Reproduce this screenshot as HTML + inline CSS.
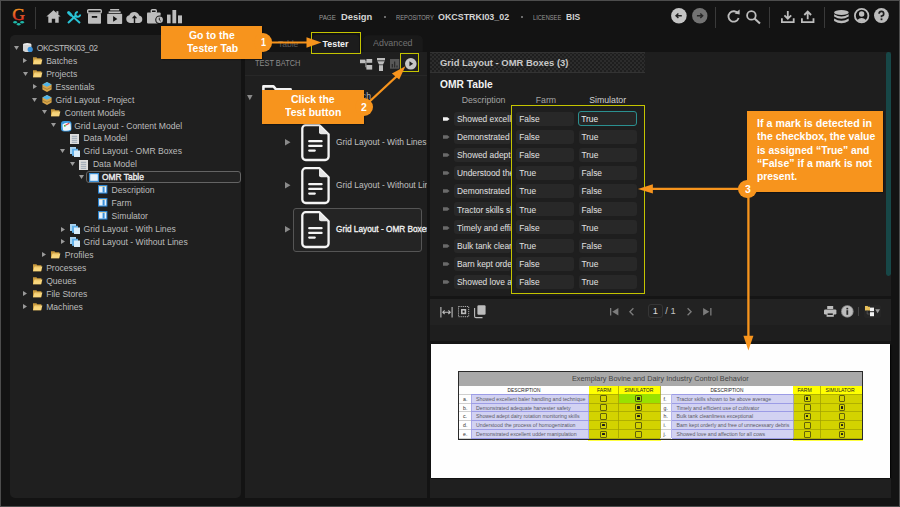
<!DOCTYPE html><html><head><meta charset="utf-8"><style>
*{margin:0;padding:0;box-sizing:border-box}
html,body{width:900px;height:507px;overflow:hidden;background:#131313}
body{position:relative;font-family:"Liberation Sans",sans-serif;color:#bdbdbd}
#frame{position:absolute;left:0;top:0;width:900px;height:507px;border:1px solid #4d4d4d;z-index:60}
.t{position:absolute;white-space:nowrap;line-height:1}
.b{position:absolute}
svg{position:absolute;overflow:visible}
.co{position:absolute;background:#f7941d;z-index:20;box-shadow:0.8px 0.8px 1.6px rgba(0,0,0,.75)}
.circ{position:absolute;width:19px;height:19px;border-radius:50%;background:#f7941d;z-index:22}
.yb{position:absolute;border:1.8px solid #c4c400;z-index:19}
.cell{position:absolute;background:#282828;border-radius:3px;height:14px;overflow:hidden}
</style></head><body>
<div id="frame"></div>
<svg style="left:10px;top:5px" width="18" height="22" viewBox="0 0 18 22"><defs><linearGradient id="gg" x1="0" y1="0" x2="0" y2="1"><stop offset="0.15" stop-color="#f4a41c"/><stop offset="0.6" stop-color="#e8542a"/><stop offset="0.85" stop-color="#d8261e"/></linearGradient></defs><text x="8.6" y="15" text-anchor="middle" font-family="Liberation Serif" font-size="17.5" fill="url(#gg)" stroke="url(#gg)" stroke-width="0.45">G</text><path d="M2.8 17.2 Q5.1 14.8 7.5 17.2 Q5.1 19.6 2.8 17.2 Z" fill="#1fb9aa"/><path d="M9.8 17.2 Q12.1 14.8 14.5 17.2 Q12.1 19.6 9.8 17.2 Z" fill="#1fb9aa"/><path d="M6.3 19.2 Q8.6 16.8 11 19.2 Q8.6 21.6 6.3 19.2 Z" fill="#1fb9aa"/></svg>
<div class="b" style="left:34.8px;top:7px;width:1.5px;height:22px;background:#383838"></div>
<svg style="left:46px;top:10px" width="15" height="13" viewBox="0 0 15 13"><path d="M7.5 0.3 L14.6 6.6 L12.7 6.6 L12.7 12.8 L9.2 12.8 L9.2 8.8 L5.8 8.8 L5.8 12.8 L2.3 12.8 L2.3 6.6 L0.4 6.6 Z" fill="#bdbdbd"/><rect x="10.4" y="1.2" width="2" height="3" fill="#bdbdbd"/></svg>
<svg style="left:66.7px;top:10.5px" width="14" height="12.5" viewBox="0 0 14 12.5"><path d="M1.6 1.6 L3.8 3.8" stroke="#2ac3d6" stroke-width="3" stroke-linecap="round"/><path d="M3.5 3.5 L13 12" stroke="#2ac3d6" stroke-width="1.9"/><path d="M1 12 L9.3 4.3" stroke="#2ac3d6" stroke-width="2.1"/><path d="M13.2 3.4 A2.4 2.4 0 1 1 10.8 1" stroke="#2ac3d6" stroke-width="1.9" fill="none"/></svg>
<svg style="left:86.7px;top:9px" width="15" height="15" viewBox="0 0 15 15"><rect x="0.7" y="0.7" width="13.6" height="3.3" rx="1" fill="none" stroke="#bdbdbd" stroke-width="1.4"/><rect x="1" y="4.6" width="13" height="10.2" rx="0.8" fill="#bdbdbd"/><rect x="4.8" y="7" width="5.4" height="1.8" fill="#131313"/></svg>
<svg style="left:106.7px;top:9px" width="15.3" height="15" viewBox="0 0 15 15"><rect x="3" y="0" width="9" height="1.5" fill="#bdbdbd"/><rect x="1.5" y="2.4" width="12" height="1.6" fill="#bdbdbd"/><rect x="0" y="4.8" width="15" height="10.2" rx="0.8" fill="#bdbdbd"/><path d="M6 7 L10.2 9.9 L6 12.8 Z" fill="#131313"/></svg>
<svg style="left:126px;top:11.2px" width="17" height="12" viewBox="0 0 17 12"><path d="M4 11.9 A3.9 3.9 0 0 1 3.3 4.2 A5.3 5.3 0 0 1 13.2 4.6 A3.7 3.7 0 0 1 13.2 11.9 Z" fill="#bdbdbd"/><path d="M8.5 4.2 L11.2 7.2 L9.2 7.2 L9.2 11.9 L7.8 11.9 L7.8 7.2 L5.8 7.2 Z" fill="#131313"/></svg>
<svg style="left:146.7px;top:9px" width="17" height="15" viewBox="0 0 17 15"><rect x="4.3" y="0.7" width="5" height="3" rx="1" fill="none" stroke="#bdbdbd" stroke-width="1.4"/><rect x="0" y="3.4" width="13.6" height="11" rx="0.8" fill="#bdbdbd"/><circle cx="12.6" cy="10.8" r="4.4" fill="#131313"/><circle cx="12.6" cy="10.8" r="3.3" fill="#bdbdbd"/><path d="M12.3 8.7 L12.3 11 L13.8 12.2" stroke="#131313" stroke-width="0.9" fill="none"/></svg>
<svg style="left:167.3px;top:10px" width="15.5" height="13.3" viewBox="0 0 15.5 13.3"><rect x="0" y="4.6" width="3.6" height="8.7" fill="#bdbdbd"/><rect x="5.4" y="0" width="3.8" height="13.3" fill="#bdbdbd"/><rect x="11" y="5.4" width="4" height="7.9" fill="#bdbdbd"/></svg>
<div class="t" style="left:319.30px;top:13.87px;font-size:7px;color:#999999;transform:scaleX(0.8926);transform-origin:0 0;">PAGE</div>
<div class="t" style="left:341.00px;top:12.51px;font-size:9.2px;color:#d4d4d4;transform:scaleX(1.0204);transform-origin:0 0;font-weight:bold;">Design</div>
<div class="b" style="left:384.2px;top:16px;width:2px;height:2px;background:#8a8a8a;border-radius:1px"></div>
<div class="t" style="left:395.70px;top:13.87px;font-size:7px;color:#999999;transform:scaleX(0.8281);transform-origin:0 0;">REPOSITORY</div>
<div class="t" style="left:438.30px;top:12.51px;font-size:9.2px;color:#d4d4d4;transform:scaleX(0.9670);transform-origin:0 0;font-weight:bold;">OKCSTRKI03_02</div>
<div class="b" style="left:521px;top:16px;width:2px;height:2px;background:#8a8a8a;border-radius:1px"></div>
<div class="t" style="left:532.70px;top:13.87px;font-size:7px;color:#999999;transform:scaleX(0.8144);transform-origin:0 0;">LICENSEE</div>
<div class="t" style="left:566.00px;top:12.51px;font-size:9.2px;color:#d4d4d4;transform:scaleX(0.9259);transform-origin:0 0;font-weight:bold;">BIS</div>
<svg style="left:671.4px;top:8.2px" width="16" height="16" viewBox="0 0 16 16"><circle cx="7.9" cy="7.8" r="7.8" fill="#c4c4c4"/><path d="M10.8 7.8 H5.2 M7.4 5.5 L5 7.8 L7.4 10.1" stroke="#222" stroke-width="1.4" fill="none"/></svg>
<svg style="left:691.8px;top:8.2px" width="16" height="16" viewBox="0 0 16 16"><circle cx="7.8" cy="7.8" r="7.7" fill="#737373"/><path d="M4.9 7.8 H10.5 M8.3 5.5 L10.7 7.8 L8.3 10.1" stroke="#262626" stroke-width="1.4" fill="none"/></svg>
<div class="b" style="left:715.2px;top:7px;width:1px;height:21px;background:#3a3a3a"></div>
<div class="b" style="left:769.4px;top:7px;width:1px;height:21px;background:#3a3a3a"></div>
<div class="b" style="left:823.8px;top:7px;width:1px;height:21px;background:#3a3a3a"></div>
<svg style="left:727px;top:9px" width="13" height="14" viewBox="0 0 13 14"><path d="M11 4.6 A5.2 5.2 0 1 0 11.6 9" stroke="#bdbdbd" stroke-width="1.8" fill="none"/><path d="M7.6 4.6 L12.6 5.6 L12.6 0.6 Z" fill="#bdbdbd"/></svg>
<svg style="left:746.3px;top:9.5px" width="15" height="14" viewBox="0 0 15 14"><circle cx="5.4" cy="5.4" r="4.3" stroke="#bdbdbd" stroke-width="1.8" fill="none"/><path d="M8.5 8.5 L14 13.5" stroke="#bdbdbd" stroke-width="2.1"/></svg>
<svg style="left:780.5px;top:10.5px" width="14" height="12" viewBox="0 0 14 12"><path d="M6.8 0 V7.5 M3.4 4.3 L6.8 7.7 L10.2 4.3" stroke="#bdbdbd" stroke-width="1.8" fill="none"/><path d="M0.9 7.2 V11.1 H12.7 V7.2" stroke="#bdbdbd" stroke-width="1.8" fill="none"/></svg>
<svg style="left:801.2px;top:10.5px" width="14" height="12" viewBox="0 0 14 12"><path d="M6.7 8.2 V0.8 M3.3 4 L6.7 0.6 L10.1 4" stroke="#bdbdbd" stroke-width="1.8" fill="none"/><path d="M0.9 7.2 V11.1 H12.5 V7.2" stroke="#bdbdbd" stroke-width="1.8" fill="none"/></svg>
<svg style="left:833.7px;top:9.7px" width="15" height="14" viewBox="0 0 15 14"><ellipse cx="7.4" cy="2.5" rx="7.3" ry="2.5" fill="#bdbdbd"/><path d="M0.1 4.2 Q7.4 8.6 14.7 4.2 V6.6 Q7.4 11 0.1 6.6 Z" fill="#bdbdbd"/><path d="M0.1 8.6 Q7.4 13 14.7 8.6 V11 Q7.4 15.4 0.1 11 Z" fill="#bdbdbd"/></svg>
<svg style="left:854.1px;top:8.3px" width="16" height="16" viewBox="0 0 16 16"><circle cx="7.65" cy="7.65" r="6.75" stroke="#bdbdbd" stroke-width="1.8" fill="none"/><circle cx="7.65" cy="6" r="2.7" fill="#bdbdbd"/><path d="M3 12.3 Q7.65 7.5 12.3 12.3 Q7.65 15.5 3 12.3 Z" fill="#bdbdbd"/></svg>
<svg style="left:874.1px;top:8.3px" width="15" height="15" viewBox="0 0 15 15"><circle cx="7.4" cy="7.5" r="7.4" fill="#bdbdbd"/><path d="M5.1 5.8 A2.3 2.3 0 1 1 7.5 8 V9.3" stroke="#1e1e1e" stroke-width="1.7" fill="none"/><rect x="6.6" y="10.4" width="1.8" height="1.8" fill="#1e1e1e"/></svg>
<div class="b" style="left:9.6px;top:35.3px;width:231.6px;height:462.3px;background:#1f1f1f;border-radius:5px"></div>
<div class="b" style="left:86px;top:170.6px;width:154.8px;height:12.4px;border:1px solid #646464;border-radius:3px;background:#232323"></div>
<svg style="left:13.6px;top:45.7px" width="5" height="4" viewBox="0 0 5 4"><path d="M0 0 H5 L2.5 4 Z" fill="#9a9a9a"/></svg>
<svg style="left:23.2px;top:43.0px" width="10" height="9" viewBox="0 0 10 9"><ellipse cx="4.2" cy="1.8" rx="4.2" ry="1.8" fill="#efefef"/><rect x="0" y="1.8" width="8.4" height="5.4" fill="#d6d6d6"/><ellipse cx="4.2" cy="7.2" rx="4.2" ry="1.8" fill="#d6d6d6"/><circle cx="7.2" cy="6.4" r="2.6" fill="#3a93dc"/></svg>
<div class="t" style="left:36.80px;top:43.82px;font-size:8.6px;color:#bcbcbc;letter-spacing:-0.55px;">OKCSTRKI03_02</div>
<svg style="left:23.1px;top:58.1px" width="4" height="5" viewBox="0 0 4 5"><path d="M0 0 V5 L4 2.5 Z" fill="#9a9a9a"/></svg>
<svg style="left:32.8px;top:57.0px" width="9.4" height="7.2" viewBox="0 0 9.4 7.2"><path d="M0 0.3 H3.4 L4.3 1.2 H8.4 V7.2 H0 Z" fill="#c8993c"/><path d="M1.6 2.6 H9.4 L8 7.2 H0 Z" fill="#f7d67e"/><path d="M2.5 3.6 H7.5" stroke="#e8c060" stroke-width="0.5"/></svg>
<div class="t" style="left:46.15px;top:56.77px;font-size:8.6px;color:#bcbcbc;">Batches</div>
<svg style="left:22.9px;top:71.6px" width="5" height="4" viewBox="0 0 5 4"><path d="M0 0 H5 L2.5 4 Z" fill="#9a9a9a"/></svg>
<svg style="left:32.8px;top:70.0px" width="9.4" height="7.2" viewBox="0 0 9.4 7.2"><path d="M0 0.3 H3.4 L4.3 1.2 H8.4 V7.2 H0 Z" fill="#c8993c"/><path d="M1.6 2.6 H9.4 L8 7.2 H0 Z" fill="#f7d67e"/><path d="M2.5 3.6 H7.5" stroke="#e8c060" stroke-width="0.5"/></svg>
<div class="t" style="left:46.15px;top:69.72px;font-size:8.6px;color:#bcbcbc;">Projects</div>
<svg style="left:32.5px;top:84.0px" width="4" height="5" viewBox="0 0 4 5"><path d="M0 0 V5 L4 2.5 Z" fill="#9a9a9a"/></svg>
<svg style="left:41.9px;top:81.8px" width="10" height="10" viewBox="0 0 10 10"><path d="M5 0 L9.6 2.4 V7.6 L5 10 L0.4 7.6 V2.4 Z" fill="#d9a64a"/><path d="M5 0 L9.6 2.4 L5 4.8 L0.4 2.4 Z" fill="#4fb4ea"/><path d="M0.4 5.2 L5 7.4 L9.6 5.2" stroke="#8a6a2a" stroke-width="0.6" fill="none"/></svg>
<div class="t" style="left:55.50px;top:82.67px;font-size:8.6px;color:#bcbcbc;">Essentials</div>
<svg style="left:32.3px;top:97.5px" width="5" height="4" viewBox="0 0 5 4"><path d="M0 0 H5 L2.5 4 Z" fill="#9a9a9a"/></svg>
<svg style="left:41.9px;top:94.8px" width="10" height="10" viewBox="0 0 10 10"><path d="M5 0 L9.6 2.4 V7.6 L5 10 L0.4 7.6 V2.4 Z" fill="#d9a64a"/><path d="M5 0 L9.6 2.4 L5 4.8 L0.4 2.4 Z" fill="#4fb4ea"/><path d="M0.4 5.2 L5 7.4 L9.6 5.2" stroke="#8a6a2a" stroke-width="0.6" fill="none"/></svg>
<div class="t" style="left:55.50px;top:95.62px;font-size:8.6px;color:#bcbcbc;">Grid Layout - Project</div>
<svg style="left:41.6px;top:110.4px" width="5" height="4" viewBox="0 0 5 4"><path d="M0 0 H5 L2.5 4 Z" fill="#9a9a9a"/></svg>
<svg style="left:51.4px;top:108.8px" width="9.4" height="7.2" viewBox="0 0 9.4 7.2"><path d="M0 0.3 H3.4 L4.3 1.2 H8.4 V7.2 H0 Z" fill="#c8993c"/><path d="M1.6 2.6 H9.4 L8 7.2 H0 Z" fill="#f7d67e"/><path d="M2.5 3.6 H7.5" stroke="#e8c060" stroke-width="0.5"/></svg>
<div class="t" style="left:64.85px;top:108.57px;font-size:8.6px;color:#bcbcbc;">Content Models</div>
<svg style="left:51.0px;top:123.4px" width="5" height="4" viewBox="0 0 5 4"><path d="M0 0 H5 L2.5 4 Z" fill="#9a9a9a"/></svg>
<svg style="left:60.6px;top:120.7px" width="10.5" height="10.5" viewBox="0 0 10.5 10.5"><rect x="0" y="0" width="10.5" height="10.5" rx="3" fill="#3a9ae0"/><path d="M1.5 3.5 Q5 0.8 9.5 2.5 L10 8.5 Q6 10.5 2 9.2 Z" fill="#eef4f8"/><path d="M4.5 4.2 L8.2 2.2" stroke="#e04040" stroke-width="1.1"/><rect x="3" y="4" width="1.6" height="1.6" fill="#40b040"/></svg>
<div class="t" style="left:74.20px;top:121.52px;font-size:8.6px;color:#bcbcbc;">Grid Layout - Content Model</div>
<svg style="left:70.0px;top:133.7px" width="9" height="10" viewBox="0 0 9 10"><rect x="0" y="0" width="9" height="10" fill="#dedede"/><path d="M1.8 2.3 H7.2 M1.8 4.3 H7.2 M1.8 6.3 H7.2 M1.8 8.3 H7.2" stroke="#8898a8" stroke-width="0.8"/></svg>
<div class="t" style="left:83.55px;top:134.47px;font-size:8.6px;color:#bcbcbc;">Data Model</div>
<svg style="left:60.3px;top:149.3px" width="5" height="4" viewBox="0 0 5 4"><path d="M0 0 H5 L2.5 4 Z" fill="#9a9a9a"/></svg>
<svg style="left:70.0px;top:146.6px" width="10" height="10" viewBox="0 0 10 10"><rect x="0" y="0" width="6" height="7" fill="#a9d3f0"/><rect x="2" y="1.8" width="6" height="7" fill="#5fb0ea"/><rect x="4" y="3.5" width="6" height="6.5" fill="#d7ecfa"/></svg>
<div class="t" style="left:83.55px;top:147.42px;font-size:8.6px;color:#bcbcbc;">Grid Layout - OMR Boxes</div>
<svg style="left:69.7px;top:162.2px" width="5" height="4" viewBox="0 0 5 4"><path d="M0 0 H5 L2.5 4 Z" fill="#9a9a9a"/></svg>
<svg style="left:79.3px;top:159.6px" width="9" height="10" viewBox="0 0 9 10"><rect x="0" y="0" width="9" height="10" fill="#dedede"/><path d="M1.8 2.3 H7.2 M1.8 4.3 H7.2 M1.8 6.3 H7.2 M1.8 8.3 H7.2" stroke="#8898a8" stroke-width="0.8"/></svg>
<div class="t" style="left:92.90px;top:160.37px;font-size:8.6px;color:#bcbcbc;">Data Model</div>
<svg style="left:79.0px;top:175.2px" width="5" height="4" viewBox="0 0 5 4"><path d="M0 0 H5 L2.5 4 Z" fill="#9a9a9a"/></svg>
<svg style="left:88.7px;top:172.5px" width="10" height="9" viewBox="0 0 10 9"><rect x="0" y="0" width="10" height="9" fill="#3a8fd6"/><rect x="1.2" y="1.2" width="7.6" height="6.6" fill="#e8f2fb"/></svg>
<div class="t" style="left:102.25px;top:173.24px;font-size:8.7px;color:#f0f0f0;transform:scaleX(0.9664);transform-origin:0 0;-webkit-text-stroke:0.35px #f0f0f0;">OMR Table</div>
<svg style="left:98.0px;top:185.4px" width="9.4" height="8.6" viewBox="0 0 9.4 8.6"><rect x="0" y="0" width="9.4" height="8.6" fill="#2a84d2"/><rect x="1.1" y="1.1" width="7.2" height="6.4" fill="#e6f2fc"/><rect x="4.6" y="1.1" width="2" height="6.4" fill="#3a90da"/><rect x="1.1" y="1.1" width="7.2" height="0.8" fill="#d8d0a0"/></svg>
<div class="t" style="left:111.60px;top:186.27px;font-size:8.6px;color:#bcbcbc;">Description</div>
<svg style="left:98.0px;top:198.4px" width="9.4" height="8.6" viewBox="0 0 9.4 8.6"><rect x="0" y="0" width="9.4" height="8.6" fill="#2a84d2"/><rect x="1.1" y="1.1" width="7.2" height="6.4" fill="#e6f2fc"/><rect x="4.6" y="1.1" width="2" height="6.4" fill="#3a90da"/><rect x="1.1" y="1.1" width="7.2" height="0.8" fill="#d8d0a0"/></svg>
<div class="t" style="left:111.60px;top:199.22px;font-size:8.6px;color:#bcbcbc;">Farm</div>
<svg style="left:98.0px;top:211.3px" width="9.4" height="8.6" viewBox="0 0 9.4 8.6"><rect x="0" y="0" width="9.4" height="8.6" fill="#2a84d2"/><rect x="1.1" y="1.1" width="7.2" height="6.4" fill="#e6f2fc"/><rect x="4.6" y="1.1" width="2" height="6.4" fill="#3a90da"/><rect x="1.1" y="1.1" width="7.2" height="0.8" fill="#d8d0a0"/></svg>
<div class="t" style="left:111.60px;top:212.17px;font-size:8.6px;color:#bcbcbc;">Simulator</div>
<svg style="left:60.5px;top:226.5px" width="4" height="5" viewBox="0 0 4 5"><path d="M0 0 V5 L4 2.5 Z" fill="#9a9a9a"/></svg>
<svg style="left:70.0px;top:224.3px" width="10" height="10" viewBox="0 0 10 10"><rect x="0" y="0" width="6" height="7" fill="#a9d3f0"/><rect x="2" y="1.8" width="6" height="7" fill="#5fb0ea"/><rect x="4" y="3.5" width="6" height="6.5" fill="#d7ecfa"/></svg>
<div class="t" style="left:83.55px;top:225.12px;font-size:8.6px;color:#bcbcbc;">Grid Layout - With Lines</div>
<svg style="left:60.5px;top:239.4px" width="4" height="5" viewBox="0 0 4 5"><path d="M0 0 V5 L4 2.5 Z" fill="#9a9a9a"/></svg>
<svg style="left:70.0px;top:237.2px" width="10" height="10" viewBox="0 0 10 10"><rect x="0" y="0" width="6" height="7" fill="#a9d3f0"/><rect x="2" y="1.8" width="6" height="7" fill="#5fb0ea"/><rect x="4" y="3.5" width="6" height="6.5" fill="#d7ecfa"/></svg>
<div class="t" style="left:83.55px;top:238.07px;font-size:8.6px;color:#bcbcbc;">Grid Layout - Without Lines</div>
<svg style="left:41.8px;top:252.4px" width="4" height="5" viewBox="0 0 4 5"><path d="M0 0 V5 L4 2.5 Z" fill="#9a9a9a"/></svg>
<svg style="left:51.4px;top:251.3px" width="9.4" height="7.2" viewBox="0 0 9.4 7.2"><path d="M0 0.3 H3.4 L4.3 1.2 H8.4 V7.2 H0 Z" fill="#c8993c"/><path d="M1.6 2.6 H9.4 L8 7.2 H0 Z" fill="#f7d67e"/><path d="M2.5 3.6 H7.5" stroke="#e8c060" stroke-width="0.5"/></svg>
<div class="t" style="left:64.85px;top:251.02px;font-size:8.6px;color:#bcbcbc;">Profiles</div>
<svg style="left:32.8px;top:264.3px" width="9.4" height="7.2" viewBox="0 0 9.4 7.2"><path d="M0 0.3 H3.4 L4.3 1.2 H8.4 V7.2 H0 Z" fill="#c8993c"/><path d="M1.6 2.6 H9.4 L8 7.2 H0 Z" fill="#f7d67e"/><path d="M2.5 3.6 H7.5" stroke="#e8c060" stroke-width="0.5"/></svg>
<div class="t" style="left:46.15px;top:263.97px;font-size:8.6px;color:#bcbcbc;">Processes</div>
<svg style="left:32.8px;top:277.2px" width="9.4" height="7.2" viewBox="0 0 9.4 7.2"><path d="M0 0.3 H3.4 L4.3 1.2 H8.4 V7.2 H0 Z" fill="#c8993c"/><path d="M1.6 2.6 H9.4 L8 7.2 H0 Z" fill="#f7d67e"/><path d="M2.5 3.6 H7.5" stroke="#e8c060" stroke-width="0.5"/></svg>
<div class="t" style="left:46.15px;top:276.92px;font-size:8.6px;color:#bcbcbc;">Queues</div>
<svg style="left:23.1px;top:291.2px" width="4" height="5" viewBox="0 0 4 5"><path d="M0 0 V5 L4 2.5 Z" fill="#9a9a9a"/></svg>
<svg style="left:32.8px;top:290.2px" width="9.4" height="7.2" viewBox="0 0 9.4 7.2"><path d="M0 0.3 H3.4 L4.3 1.2 H8.4 V7.2 H0 Z" fill="#c8993c"/><path d="M1.6 2.6 H9.4 L8 7.2 H0 Z" fill="#f7d67e"/><path d="M2.5 3.6 H7.5" stroke="#e8c060" stroke-width="0.5"/></svg>
<div class="t" style="left:46.15px;top:289.87px;font-size:8.6px;color:#bcbcbc;">File Stores</div>
<svg style="left:23.1px;top:304.2px" width="4" height="5" viewBox="0 0 4 5"><path d="M0 0 V5 L4 2.5 Z" fill="#9a9a9a"/></svg>
<svg style="left:32.8px;top:303.1px" width="9.4" height="7.2" viewBox="0 0 9.4 7.2"><path d="M0 0.3 H3.4 L4.3 1.2 H8.4 V7.2 H0 Z" fill="#c8993c"/><path d="M1.6 2.6 H9.4 L8 7.2 H0 Z" fill="#f7d67e"/><path d="M2.5 3.6 H7.5" stroke="#e8c060" stroke-width="0.5"/></svg>
<div class="t" style="left:46.15px;top:302.82px;font-size:8.6px;color:#bcbcbc;">Machines</div>
<div class="b" style="left:363.6px;top:35.8px;width:58.2px;height:15.2px;background:#191919;border-radius:4px 4px 0 0;box-shadow:0 0 0 0.6px #1c1c1c"></div>
<div class="b" style="left:313px;top:34.5px;width:45.5px;height:17.5px;background:#1c1c1c;border-radius:3px 3px 0 0"></div>
<div class="t" style="left:277.50px;top:39.97px;font-size:8.9px;color:#5c5c5c;transform:scaleX(0.9541);transform-origin:0 0;">Table</div>
<div class="t" style="left:322.50px;top:39.57px;font-size:8.9px;color:#f2f2f2;font-weight:bold;">Tester</div>
<div class="t" style="left:372.70px;top:39.40px;font-size:9.1px;color:#727272;transform:scaleX(0.9784);transform-origin:0 0;">Advanced</div>
<div class="b" style="left:244.8px;top:51.6px;width:182.4px;height:446.4px;background:#1f1f1f"></div>
<div class="b" style="left:244.8px;top:75.3px;width:181.8px;height:1px;background:#272727"></div>
<div class="t" style="left:254.80px;top:60.26px;font-size:8.2px;color:#8c8c8c;transform:scaleX(0.9051);transform-origin:0 0;">TEST BATCH</div>
<svg style="left:360px;top:58.6px" width="12.2" height="10.6" viewBox="0 0 12.2 10.6"><rect x="0" y="0.6" width="5.4" height="3.6" fill="#bdbdbd"/><rect x="6.4" y="0" width="5.8" height="3.8" fill="#bdbdbd"/><rect x="6.4" y="6" width="5.8" height="4.6" fill="#bdbdbd"/><path d="M5.4 2.4 H6.4 M5.9 2.4 V8.2 H6.4" stroke="#bdbdbd" stroke-width="0.9" fill="none"/></svg>
<svg style="left:377px;top:57.5px" width="8" height="13" viewBox="0 0 8 13"><rect x="0" y="0" width="8" height="2.4" fill="#bdbdbd"/><path d="M0.4 3.3 H7.6 L6 6.6 H2 Z" fill="#bdbdbd"/><rect x="2" y="7.2" width="4" height="5.8" fill="#bdbdbd"/></svg>
<svg style="left:390.4px;top:59px" width="9.3" height="9.7" viewBox="0 0 9.3 9.7"><rect x="0" y="0" width="9.3" height="9.7" fill="#585858"/><path d="M2.3 8.5 V5 M4.65 8.5 V2.5 M7 8.5 V6.5" stroke="#2a2a2a" stroke-width="1.2"/></svg>
<svg style="left:404.6px;top:58.4px" width="11.6" height="11.6" viewBox="0 0 12 12"><circle cx="6" cy="6" r="6" fill="#c6c6c6"/><path d="M4.6 3.4 L8.4 6 L4.6 8.6 Z" fill="#1f1f1f"/></svg>
<svg style="left:247.4px;top:95.0px" width="5.6" height="5.2" viewBox="0 0 5.6 5.2"><path d="M0 0 H5.6 L2.8 5.2 Z" fill="#8a8a8a"/></svg>
<svg style="left:261.6px;top:85.4px" width="30" height="24" viewBox="0 0 30 24"><path d="M1.4 1.4 H11.5 L14 4.3 H28.6 V22.6 H1.4 Z" fill="none" stroke="#f2f2f2" stroke-width="2.6" stroke-linejoin="round"/></svg>
<div class="b" style="left:293px;top:208px;width:129px;height:43.5px;border:1px solid #555;border-radius:3px;background:#242424"></div>
<svg style="left:284.6px;top:138.7px" width="5.5" height="6.5" viewBox="0 0 5.5 6.5"><path d="M0 0 V6.5 L5.5 3.25 Z" fill="#8a8a8a"/></svg>
<svg style="left:300.6px;top:124px" width="29" height="37" viewBox="0 0 29 37"><path d="M4.7 1.2 H18.5 L27.6 10.3 V32.6 A3.4 3.4 0 0 1 24.2 36 H4.7 A3.4 3.4 0 0 1 1.3 32.6 V4.6 A3.4 3.4 0 0 1 4.7 1.2 Z" fill="none" stroke="#f4f4f4" stroke-width="2.3" stroke-linejoin="round"/><path d="M18 1.2 V8.3 A2 2 0 0 0 20 10.3 H27.6 Z" fill="#e6e6e6"/><path d="M8.2 17.2 H20.6 M8.2 21.9 H20.6 M8.2 26.6 H13.8" stroke="#f4f4f4" stroke-width="2.2" stroke-linecap="round"/></svg>
<svg style="left:284.6px;top:182.0px" width="5.5" height="6.5" viewBox="0 0 5.5 6.5"><path d="M0 0 V6.5 L5.5 3.25 Z" fill="#8a8a8a"/></svg>
<svg style="left:300.6px;top:167.4px" width="29" height="37" viewBox="0 0 29 37"><path d="M4.7 1.2 H18.5 L27.6 10.3 V32.6 A3.4 3.4 0 0 1 24.2 36 H4.7 A3.4 3.4 0 0 1 1.3 32.6 V4.6 A3.4 3.4 0 0 1 4.7 1.2 Z" fill="none" stroke="#f4f4f4" stroke-width="2.3" stroke-linejoin="round"/><path d="M18 1.2 V8.3 A2 2 0 0 0 20 10.3 H27.6 Z" fill="#e6e6e6"/><path d="M8.2 17.2 H20.6 M8.2 21.9 H20.6 M8.2 26.6 H13.8" stroke="#f4f4f4" stroke-width="2.2" stroke-linecap="round"/></svg>
<svg style="left:284.6px;top:225.5px" width="5.5" height="6.5" viewBox="0 0 5.5 6.5"><path d="M0 0 V6.5 L5.5 3.25 Z" fill="#8a8a8a"/></svg>
<svg style="left:300.6px;top:211px" width="29" height="37" viewBox="0 0 29 37"><path d="M4.7 1.2 H18.5 L27.6 10.3 V32.6 A3.4 3.4 0 0 1 24.2 36 H4.7 A3.4 3.4 0 0 1 1.3 32.6 V4.6 A3.4 3.4 0 0 1 4.7 1.2 Z" fill="none" stroke="#f4f4f4" stroke-width="2.3" stroke-linejoin="round"/><path d="M18 1.2 V8.3 A2 2 0 0 0 20 10.3 H27.6 Z" fill="#e6e6e6"/><path d="M8.2 17.2 H20.6 M8.2 21.9 H20.6 M8.2 26.6 H13.8" stroke="#f4f4f4" stroke-width="2.2" stroke-linecap="round"/></svg>
<div class="b" style="left:244px;top:80px;width:183.2px;height:300px;overflow:hidden">
<div class="t" style="left:86.80px;top:11.92px;font-size:8.6px;color:#bcbcbc;">Test Batch</div>
<div class="t" style="left:92.10px;top:57.64px;font-size:8.7px;color:#c0c0c0;transform:scaleX(0.9708);transform-origin:0 0;">Grid Layout - With Lines</div>
<div class="t" style="left:92.10px;top:100.94px;font-size:8.7px;color:#c0c0c0;transform:scaleX(0.9708);transform-origin:0 0;">Grid Layout - Without Lines</div>
<div class="t" style="left:92.20px;top:144.52px;font-size:8.6px;color:#f4f4f4;transform:scaleX(0.9598);transform-origin:0 0;-webkit-text-stroke:0.3px #f4f4f4;">Grid Layout - OMR Boxes</div>
</div>
<div class="b" style="left:430px;top:52px;width:460.6px;height:246px;background:#1e1e1e"></div>
<div class="b" style="left:430px;top:52px;width:215px;height:20px;background-color:#252525;background-image:repeating-conic-gradient(#2c2c2c 0 25%, #1e1e1e 0 50%);background-size:4px 4px"></div>
<div class="b" style="left:430px;top:72px;width:215px;height:1px;background:#333"></div>
<div class="b" style="left:430px;top:51.8px;width:215px;height:1px;background:#323232"></div>
<div class="t" style="left:439.70px;top:58.10px;font-size:9.8px;color:#c8c8c8;transform:scaleX(0.9633);transform-origin:0 0;font-weight:bold;">Grid Layout - OMR Boxes (3)</div>
<div class="t" style="left:439.70px;top:79.60px;font-size:10.4px;color:#f2f2f2;transform:scaleX(0.9861);transform-origin:0 0;font-weight:bold;">OMR Table</div>
<div class="t" style="left:461.70px;top:95.59px;font-size:8.75px;color:#a4a4a4;">Description</div>
<div class="t" style="left:535.70px;top:95.59px;font-size:8.75px;color:#a4a4a4;">Farm</div>
<div class="t" style="left:589.20px;top:95.59px;font-size:8.75px;color:#d0d0d0;">Simulator</div>
<svg style="left:442.8px;top:116.7px" width="6.6" height="4" viewBox="0 0 6.6 4"><path d="M0 0.3 H4.4 L6.6 2 L4.4 3.7 H0 Z" fill="#f2f2f2"/></svg>
<div class="cell" style="left:454.4px;top:111.50px;width:56.5px"><div class="t" style="left:2.60px;top:3.29px;font-size:8.4px;color:#e2e2e2;">Showed excellent baler handling and technique</div></div>
<div class="cell" style="left:515.8px;top:111.50px;width:58.5px"><div class="t" style="left:3.40px;top:3.29px;font-size:8.4px;color:#e2e2e2;">False</div></div>
<div class="cell" style="left:578.2px;top:111.00px;width:58.8px;height:14.8px;border:1.2px solid #2b9090;background:#262626"><div class="t" style="left:2.10px;top:2.59px;font-size:8.4px;color:#ececec;">True</div></div>
<svg style="left:442.8px;top:134.8px" width="6.6" height="4" viewBox="0 0 6.6 4"><path d="M0 0.3 H4.4 L6.6 2 L4.4 3.7 H0 Z" fill="#6a6a6a"/></svg>
<div class="cell" style="left:454.4px;top:129.65px;width:56.5px"><div class="t" style="left:2.60px;top:3.29px;font-size:8.4px;color:#e2e2e2;">Demonstrated adequate harvester safety</div></div>
<div class="cell" style="left:515.8px;top:129.65px;width:58.5px"><div class="t" style="left:3.40px;top:3.29px;font-size:8.4px;color:#e2e2e2;">False</div></div>
<div class="cell" style="left:578.5px;top:129.65px;width:58.5px"><div class="t" style="left:3.00px;top:3.29px;font-size:8.4px;color:#e2e2e2;">True</div></div>
<svg style="left:442.8px;top:153.0px" width="6.6" height="4" viewBox="0 0 6.6 4"><path d="M0 0.3 H4.4 L6.6 2 L4.4 3.7 H0 Z" fill="#6a6a6a"/></svg>
<div class="cell" style="left:454.4px;top:147.80px;width:56.5px"><div class="t" style="left:2.60px;top:3.29px;font-size:8.4px;color:#e2e2e2;">Showed adept dairy rotation monitoring skills</div></div>
<div class="cell" style="left:515.8px;top:147.80px;width:58.5px"><div class="t" style="left:3.40px;top:3.29px;font-size:8.4px;color:#e2e2e2;">False</div></div>
<div class="cell" style="left:578.5px;top:147.80px;width:58.5px"><div class="t" style="left:3.00px;top:3.29px;font-size:8.4px;color:#e2e2e2;">True</div></div>
<svg style="left:442.8px;top:171.1px" width="6.6" height="4" viewBox="0 0 6.6 4"><path d="M0 0.3 H4.4 L6.6 2 L4.4 3.7 H0 Z" fill="#6a6a6a"/></svg>
<div class="cell" style="left:454.4px;top:165.95px;width:56.5px"><div class="t" style="left:2.60px;top:3.29px;font-size:8.4px;color:#e2e2e2;">Understood the process of homogenization</div></div>
<div class="cell" style="left:515.8px;top:165.95px;width:58.5px"><div class="t" style="left:3.40px;top:3.29px;font-size:8.4px;color:#e2e2e2;">True</div></div>
<div class="cell" style="left:578.5px;top:165.95px;width:58.5px"><div class="t" style="left:3.00px;top:3.29px;font-size:8.4px;color:#e2e2e2;">False</div></div>
<svg style="left:442.8px;top:189.3px" width="6.6" height="4" viewBox="0 0 6.6 4"><path d="M0 0.3 H4.4 L6.6 2 L4.4 3.7 H0 Z" fill="#6a6a6a"/></svg>
<div class="cell" style="left:454.4px;top:184.10px;width:56.5px"><div class="t" style="left:2.60px;top:3.29px;font-size:8.4px;color:#e2e2e2;">Demonstrated excellent udder manipulation</div></div>
<div class="cell" style="left:515.8px;top:184.10px;width:58.5px"><div class="t" style="left:3.40px;top:3.29px;font-size:8.4px;color:#e2e2e2;">True</div></div>
<div class="cell" style="left:578.5px;top:184.10px;width:58.5px"><div class="t" style="left:3.00px;top:3.29px;font-size:8.4px;color:#e2e2e2;">False</div></div>
<svg style="left:442.8px;top:207.4px" width="6.6" height="4" viewBox="0 0 6.6 4"><path d="M0 0.3 H4.4 L6.6 2 L4.4 3.7 H0 Z" fill="#6a6a6a"/></svg>
<div class="cell" style="left:454.4px;top:202.25px;width:56.5px"><div class="t" style="left:2.60px;top:3.29px;font-size:8.4px;color:#e2e2e2;">Tractor skills shown to be above average</div></div>
<div class="cell" style="left:515.8px;top:202.25px;width:58.5px"><div class="t" style="left:3.40px;top:3.29px;font-size:8.4px;color:#e2e2e2;">True</div></div>
<div class="cell" style="left:578.5px;top:202.25px;width:58.5px"><div class="t" style="left:3.00px;top:3.29px;font-size:8.4px;color:#e2e2e2;">False</div></div>
<svg style="left:442.8px;top:225.6px" width="6.6" height="4" viewBox="0 0 6.6 4"><path d="M0 0.3 H4.4 L6.6 2 L4.4 3.7 H0 Z" fill="#6a6a6a"/></svg>
<div class="cell" style="left:454.4px;top:220.40px;width:56.5px"><div class="t" style="left:2.60px;top:3.29px;font-size:8.4px;color:#e2e2e2;">Timely and efficient use of cultivator</div></div>
<div class="cell" style="left:515.8px;top:220.40px;width:58.5px"><div class="t" style="left:3.40px;top:3.29px;font-size:8.4px;color:#e2e2e2;">False</div></div>
<div class="cell" style="left:578.5px;top:220.40px;width:58.5px"><div class="t" style="left:3.00px;top:3.29px;font-size:8.4px;color:#e2e2e2;">True</div></div>
<svg style="left:442.8px;top:243.7px" width="6.6" height="4" viewBox="0 0 6.6 4"><path d="M0 0.3 H4.4 L6.6 2 L4.4 3.7 H0 Z" fill="#6a6a6a"/></svg>
<div class="cell" style="left:454.4px;top:238.55px;width:56.5px"><div class="t" style="left:2.60px;top:3.29px;font-size:8.4px;color:#e2e2e2;">Bulk tank cleanliness exceptional</div></div>
<div class="cell" style="left:515.8px;top:238.55px;width:58.5px"><div class="t" style="left:3.40px;top:3.29px;font-size:8.4px;color:#e2e2e2;">True</div></div>
<div class="cell" style="left:578.5px;top:238.55px;width:58.5px"><div class="t" style="left:3.00px;top:3.29px;font-size:8.4px;color:#e2e2e2;">False</div></div>
<svg style="left:442.8px;top:261.9px" width="6.6" height="4" viewBox="0 0 6.6 4"><path d="M0 0.3 H4.4 L6.6 2 L4.4 3.7 H0 Z" fill="#6a6a6a"/></svg>
<div class="cell" style="left:454.4px;top:256.70px;width:56.5px"><div class="t" style="left:2.60px;top:3.29px;font-size:8.4px;color:#e2e2e2;">Barn kept orderly and free of unnecessary debris</div></div>
<div class="cell" style="left:515.8px;top:256.70px;width:58.5px"><div class="t" style="left:3.40px;top:3.29px;font-size:8.4px;color:#e2e2e2;">False</div></div>
<div class="cell" style="left:578.5px;top:256.70px;width:58.5px"><div class="t" style="left:3.00px;top:3.29px;font-size:8.4px;color:#e2e2e2;">True</div></div>
<svg style="left:442.8px;top:280.1px" width="6.6" height="4" viewBox="0 0 6.6 4"><path d="M0 0.3 H4.4 L6.6 2 L4.4 3.7 H0 Z" fill="#6a6a6a"/></svg>
<div class="cell" style="left:454.4px;top:274.85px;width:56.5px"><div class="t" style="left:2.60px;top:3.29px;font-size:8.4px;color:#e2e2e2;">Showed love and affection for all cows</div></div>
<div class="cell" style="left:515.8px;top:274.85px;width:58.5px"><div class="t" style="left:3.40px;top:3.29px;font-size:8.4px;color:#e2e2e2;">False</div></div>
<div class="cell" style="left:578.5px;top:274.85px;width:58.5px"><div class="t" style="left:3.00px;top:3.29px;font-size:8.4px;color:#e2e2e2;">True</div></div>
<div class="b" style="left:885.8px;top:52.2px;width:4.8px;height:223.8px;background:#174747;border-radius:2.4px"></div>
<div class="b" style="left:430px;top:295.5px;width:461px;height:3px;background:#151515"></div>
<div class="b" style="left:430px;top:298.5px;width:461px;height:26px;background:#222"></div>
<div class="b" style="left:430px;top:324.5px;width:461px;height:18.5px;background:#1e1e1e"></div>
<svg style="left:439.5px;top:306.5px" width="13" height="10.5" viewBox="0 0 13 10.5"><path d="M0.9 0 V10.5 M12.1 0 V10.5" stroke="#bdbdbd" stroke-width="1.1"/><path d="M2.8 5.2 H10.2 M4.6 3.4 L2.8 5.2 L4.6 7 M8.4 3.4 L10.2 5.2 L8.4 7" stroke="#bdbdbd" stroke-width="1.1" fill="none"/></svg>
<svg style="left:457.8px;top:305.8px" width="11.2" height="11.2" viewBox="0 0 11.2 11.2"><rect x="0.5" y="0.5" width="10.2" height="10.2" stroke="#bdbdbd" stroke-width="0.9" stroke-dasharray="1.2 0.9" fill="none"/><rect x="3" y="3" width="5.2" height="5.2" fill="#bdbdbd"/><rect x="4.6" y="4.6" width="2" height="2" fill="#111"/></svg>
<svg style="left:474px;top:305.3px" width="12" height="13" viewBox="0 0 12 13"><path d="M0.6 3 V11.2 A1.4 1.4 0 0 0 2 12.6 H8.5" stroke="#bdbdbd" stroke-width="1.1" fill="none"/><rect x="3.4" y="0.2" width="8.2" height="9.6" rx="1.2" fill="#bdbdbd"/></svg>
<svg style="left:609.6px;top:308.3px" width="8.5" height="7.4" viewBox="0 0 8.5 7.4"><path d="M0.65 0 V7.4" stroke="#7c7c7c" stroke-width="1.3"/><path d="M8.4 0 L2.2 3.7 L8.4 7.4 Z" fill="#7c7c7c"/></svg>
<svg style="left:628.5px;top:308.3px" width="5" height="7.6" viewBox="0 0 5 7.6"><path d="M4.4 0.3 L0.9 3.8 L4.4 7.3" stroke="#7c7c7c" stroke-width="1.3" fill="none"/></svg>
<div class="b" style="left:648.3px;top:303.7px;width:14.4px;height:14.6px;border:1px solid #353535;border-radius:3px"></div>
<div class="t" style="left:652.80px;top:307.33px;font-size:9.3px;color:#dadada;">1</div>
<div class="t" style="left:665.30px;top:307.33px;font-size:9.3px;color:#c4c4c4;">/ 1</div>
<svg style="left:687.3px;top:308.3px" width="5" height="7.6" viewBox="0 0 5 7.6"><path d="M0.6 0.3 L4.1 3.8 L0.6 7.3" stroke="#7c7c7c" stroke-width="1.3" fill="none"/></svg>
<svg style="left:702.6px;top:308.3px" width="8.5" height="7.4" viewBox="0 0 8.5 7.4"><path d="M7.85 0 V7.4" stroke="#7c7c7c" stroke-width="1.3"/><path d="M0.1 0 L6.3 3.7 L0.1 7.4 Z" fill="#7c7c7c"/></svg>
<svg style="left:823.9px;top:306px" width="12.4" height="11" viewBox="0 0 12.4 11"><rect x="3.2" y="0" width="6" height="3" fill="#bdbdbd"/><rect x="0" y="3.4" width="12.4" height="5" rx="1.2" fill="#bdbdbd"/><rect x="2.6" y="6.6" width="7.2" height="4.2" fill="#bdbdbd"/><rect x="3.6" y="7.4" width="5.2" height="1.6" fill="#222"/></svg>
<svg style="left:840.8px;top:305.3px" width="12.6" height="12.8" viewBox="0 0 12.6 12.8"><circle cx="6.3" cy="6.4" r="6.2" fill="#bdbdbd"/><circle cx="6.3" cy="6.4" r="5.9" fill="none" stroke="#555" stroke-width="0.5"/><rect x="5.4" y="5.2" width="1.8" height="4.6" fill="#2a2a2a"/><rect x="5.4" y="2.8" width="1.8" height="1.6" fill="#2a2a2a"/></svg>
<div class="b" style="left:858.2px;top:306.6px;width:1px;height:9.7px;background:#444"></div>
<div class="b" style="left:863.8px;top:305px;width:17px;height:12.5px;background:#262626;border-radius:2px"></div>
<svg style="left:865px;top:306.3px" width="16" height="10.5" viewBox="0 0 16 10.5"><path d="M0 0 H2.5 L3.2 0.8 H5 V4.4 H0 Z" fill="#e8c05a"/><rect x="5" y="1.6" width="4" height="3.6" fill="#f2f2f2"/><rect x="5" y="6.2" width="4" height="4" fill="#f2f2f2"/><path d="M2.2 4.4 V8 H5" stroke="#666" stroke-width="0.6" fill="none"/><path d="M10.2 3.2 H15 L12.6 7.2 Z" fill="#9a9a9a"/></svg>
<div class="b" style="left:430px;top:341.3px;width:461px;height:2.5px;background:#161616"></div>
<div class="b" style="left:431px;top:343.6px;width:458.6px;height:134.8px;background:#fefefe;box-shadow:0.5px 0.8px 1.2px rgba(0,0,0,.9)"></div>
<div class="b" style="left:430px;top:478px;width:461px;height:20px;background:#1f1f1f"></div>
<div class="b" style="left:430.8px;top:478.3px;width:459px;height:1.2px;background:#111"></div>
<div class="b" style="left:458.2px;top:371px;width:404.4px;height:14.5px;background:#a9a9a9"></div><div class="t" style="left:571.70px;top:374.94px;font-size:8.1px;color:#444;transform:scaleX(0.9028);transform-origin:0 0;">Exemplary Bovine and Dairy Industry Control Behavior</div><div class="b" style="left:588.7px;top:385.5px;width:29.9px;height:8.7px;background:#ffff00"></div><div class="b" style="left:588.7px;top:394.2px;width:29.9px;height:46.3px;background:#d3d300"></div><div class="b" style="left:618.6px;top:385.5px;width:41.8px;height:8.7px;background:#ffff00"></div><div class="b" style="left:618.6px;top:394.2px;width:41.8px;height:46.3px;background:#d3d300"></div><div class="b" style="left:793.1px;top:385.5px;width:27.7px;height:8.7px;background:#ffff00"></div><div class="b" style="left:793.1px;top:394.2px;width:27.7px;height:46.3px;background:#d3d300"></div><div class="b" style="left:820.8px;top:385.5px;width:41.8px;height:8.7px;background:#ffff00"></div><div class="b" style="left:820.8px;top:394.2px;width:41.8px;height:46.3px;background:#d3d300"></div><div class="b" style="left:471.3px;top:394.2px;width:117.4px;height:44.2px;background:#d2d2f2"></div><div class="b" style="left:671.5px;top:394.2px;width:121.6px;height:44.2px;background:#d2d2f2"></div><div class="b" style="left:458.2px;top:393.7px;width:13.1px;height:1px;background:#cfcfcf"></div><div class="b" style="left:471.3px;top:393.7px;width:117.4px;height:1px;background:#9c9ce6"></div><div class="b" style="left:588.7px;top:393.7px;width:71.7px;height:1px;background:#b0b000"></div><div class="b" style="left:660.4px;top:393.7px;width:11.1px;height:1px;background:#cfcfcf"></div><div class="b" style="left:671.5px;top:393.7px;width:121.6px;height:1px;background:#9c9ce6"></div><div class="b" style="left:793.1px;top:393.7px;width:69.5px;height:1px;background:#b0b000"></div><div class="b" style="left:458.2px;top:402.5px;width:13.1px;height:1px;background:#cfcfcf"></div><div class="b" style="left:471.3px;top:402.5px;width:117.4px;height:1px;background:#9c9ce6"></div><div class="b" style="left:588.7px;top:402.5px;width:71.7px;height:1px;background:#b0b000"></div><div class="b" style="left:660.4px;top:402.5px;width:11.1px;height:1px;background:#cfcfcf"></div><div class="b" style="left:671.5px;top:402.5px;width:121.6px;height:1px;background:#9c9ce6"></div><div class="b" style="left:793.1px;top:402.5px;width:69.5px;height:1px;background:#b0b000"></div><div class="b" style="left:458.2px;top:411.4px;width:13.1px;height:1px;background:#cfcfcf"></div><div class="b" style="left:471.3px;top:411.4px;width:117.4px;height:1px;background:#9c9ce6"></div><div class="b" style="left:588.7px;top:411.4px;width:71.7px;height:1px;background:#b0b000"></div><div class="b" style="left:660.4px;top:411.4px;width:11.1px;height:1px;background:#cfcfcf"></div><div class="b" style="left:671.5px;top:411.4px;width:121.6px;height:1px;background:#9c9ce6"></div><div class="b" style="left:793.1px;top:411.4px;width:69.5px;height:1px;background:#b0b000"></div><div class="b" style="left:458.2px;top:420.2px;width:13.1px;height:1px;background:#cfcfcf"></div><div class="b" style="left:471.3px;top:420.2px;width:117.4px;height:1px;background:#9c9ce6"></div><div class="b" style="left:588.7px;top:420.2px;width:71.7px;height:1px;background:#b0b000"></div><div class="b" style="left:660.4px;top:420.2px;width:11.1px;height:1px;background:#cfcfcf"></div><div class="b" style="left:671.5px;top:420.2px;width:121.6px;height:1px;background:#9c9ce6"></div><div class="b" style="left:793.1px;top:420.2px;width:69.5px;height:1px;background:#b0b000"></div><div class="b" style="left:458.2px;top:429.1px;width:13.1px;height:1px;background:#cfcfcf"></div><div class="b" style="left:471.3px;top:429.1px;width:117.4px;height:1px;background:#9c9ce6"></div><div class="b" style="left:588.7px;top:429.1px;width:71.7px;height:1px;background:#b0b000"></div><div class="b" style="left:660.4px;top:429.1px;width:11.1px;height:1px;background:#cfcfcf"></div><div class="b" style="left:671.5px;top:429.1px;width:121.6px;height:1px;background:#9c9ce6"></div><div class="b" style="left:793.1px;top:429.1px;width:69.5px;height:1px;background:#b0b000"></div><div class="b" style="left:458.2px;top:437.9px;width:13.1px;height:1px;background:#cfcfcf"></div><div class="b" style="left:471.3px;top:437.9px;width:117.4px;height:1px;background:#9c9ce6"></div><div class="b" style="left:588.7px;top:437.9px;width:71.7px;height:1px;background:#b0b000"></div><div class="b" style="left:660.4px;top:437.9px;width:11.1px;height:1px;background:#cfcfcf"></div><div class="b" style="left:671.5px;top:437.9px;width:121.6px;height:1px;background:#9c9ce6"></div><div class="b" style="left:793.1px;top:437.9px;width:69.5px;height:1px;background:#b0b000"></div><div class="b" style="left:470.8px;top:394.2px;width:1px;height:44.2px;background:#9c9ce6;opacity:0.75"></div><div class="b" style="left:588.2px;top:394.2px;width:1px;height:44.2px;background:#9c9ce6;opacity:0.75"></div><div class="b" style="left:618.1px;top:385.5px;width:1px;height:52.9px;background:#a0a000;opacity:0.75"></div><div class="b" style="left:659.9px;top:385.5px;width:1px;height:52.9px;background:#a0a000;opacity:0.75"></div><div class="b" style="left:671.0px;top:394.2px;width:1px;height:44.2px;background:#9c9ce6;opacity:0.75"></div><div class="b" style="left:792.6px;top:394.2px;width:1px;height:44.2px;background:#9c9ce6;opacity:0.75"></div><div class="b" style="left:820.3px;top:385.5px;width:1px;height:52.9px;background:#a0a000;opacity:0.75"></div><div class="t" style="left:507.60px;top:388.74px;font-size:4.8px;color:#222;">DESCRIPTION</div><div class="t" style="left:710.60px;top:388.74px;font-size:4.8px;color:#222;">DESCRIPTION</div><div class="t" style="left:597.00px;top:387.98px;font-size:5.1px;color:#222;">FARM</div><div class="t" style="left:797.50px;top:387.98px;font-size:5.1px;color:#222;">FARM</div><div class="t" style="left:624.20px;top:387.98px;font-size:5.1px;color:#222;">SIMULATOR</div><div class="t" style="left:825.50px;top:387.98px;font-size:5.1px;color:#222;">SIMULATOR</div><div class="b" style="left:618.6px;top:394.2px;width:41.8px;height:8.84px;background:#99e100"></div><div class="t" style="left:463.00px;top:396.80px;font-size:5.2px;color:#333;">a.</div><div class="t" style="left:663.50px;top:396.80px;font-size:5.2px;color:#333;">f.</div><div class="t" style="left:476.00px;top:396.77px;font-size:5.23px;color:#5a5a66;">Showed excellent baler handling and technique</div><div class="t" style="left:676.50px;top:396.77px;font-size:5.23px;color:#5a5a66;">Tractor skills shown to be above average</div><div class="b" style="left:600.3px;top:395.1px;width:6.6px;height:7px;border:0.9px solid #62620a;border-radius:1px"></div><div class="b" style="left:635.1px;top:395.1px;width:6.6px;height:7px;border:0.9px solid #62620a;border-radius:1px"></div><div class="b" style="left:637.2px;top:397.4px;width:2.4px;height:2.4px;background:#1a1a1a;border-radius:0.5px"></div><div class="b" style="left:804.0px;top:395.1px;width:6.6px;height:7px;border:0.9px solid #62620a;border-radius:1px"></div><div class="b" style="left:806.1px;top:397.4px;width:2.4px;height:2.4px;background:#1a1a1a;border-radius:0.5px"></div><div class="b" style="left:838.5px;top:395.1px;width:6.6px;height:7px;border:0.9px solid #62620a;border-radius:1px"></div><div class="t" style="left:463.00px;top:405.64px;font-size:5.2px;color:#333;">b.</div><div class="t" style="left:663.50px;top:405.64px;font-size:5.2px;color:#333;">g.</div><div class="t" style="left:476.00px;top:405.61px;font-size:5.23px;color:#5a5a66;">Demonstrated adequate harvester safety</div><div class="t" style="left:676.50px;top:405.61px;font-size:5.23px;color:#5a5a66;">Timely and efficient use of cultivator</div><div class="b" style="left:600.3px;top:403.9px;width:6.6px;height:7px;border:0.9px solid #62620a;border-radius:1px"></div><div class="b" style="left:635.1px;top:403.9px;width:6.6px;height:7px;border:0.9px solid #62620a;border-radius:1px"></div><div class="b" style="left:637.2px;top:406.2px;width:2.4px;height:2.4px;background:#1a1a1a;border-radius:0.5px"></div><div class="b" style="left:804.0px;top:403.9px;width:6.6px;height:7px;border:0.9px solid #62620a;border-radius:1px"></div><div class="b" style="left:838.5px;top:403.9px;width:6.6px;height:7px;border:0.9px solid #62620a;border-radius:1px"></div><div class="b" style="left:840.6px;top:406.2px;width:2.4px;height:2.4px;background:#1a1a1a;border-radius:0.5px"></div><div class="t" style="left:463.00px;top:414.48px;font-size:5.2px;color:#333;">c.</div><div class="t" style="left:663.50px;top:414.48px;font-size:5.2px;color:#333;">h.</div><div class="t" style="left:476.00px;top:414.45px;font-size:5.23px;color:#5a5a66;">Showed adept dairy rotation monitoring skills</div><div class="t" style="left:676.50px;top:414.45px;font-size:5.23px;color:#5a5a66;">Bulk tank cleanliness exceptional</div><div class="b" style="left:600.3px;top:412.8px;width:6.6px;height:7px;border:0.9px solid #62620a;border-radius:1px"></div><div class="b" style="left:635.1px;top:412.8px;width:6.6px;height:7px;border:0.9px solid #62620a;border-radius:1px"></div><div class="b" style="left:637.2px;top:415.1px;width:2.4px;height:2.4px;background:#1a1a1a;border-radius:0.5px"></div><div class="b" style="left:804.0px;top:412.8px;width:6.6px;height:7px;border:0.9px solid #62620a;border-radius:1px"></div><div class="b" style="left:806.1px;top:415.1px;width:2.4px;height:2.4px;background:#1a1a1a;border-radius:0.5px"></div><div class="b" style="left:838.5px;top:412.8px;width:6.6px;height:7px;border:0.9px solid #62620a;border-radius:1px"></div><div class="t" style="left:463.00px;top:423.32px;font-size:5.2px;color:#333;">d.</div><div class="t" style="left:663.50px;top:423.32px;font-size:5.2px;color:#333;">i.</div><div class="t" style="left:476.00px;top:423.29px;font-size:5.23px;color:#5a5a66;">Understood the process of homogenization</div><div class="t" style="left:676.50px;top:423.29px;font-size:5.23px;color:#5a5a66;">Barn kept orderly and free of unnecessary debris</div><div class="b" style="left:600.3px;top:421.6px;width:6.6px;height:7px;border:0.9px solid #62620a;border-radius:1px"></div><div class="b" style="left:602.4px;top:423.9px;width:2.4px;height:2.4px;background:#1a1a1a;border-radius:0.5px"></div><div class="b" style="left:635.1px;top:421.6px;width:6.6px;height:7px;border:0.9px solid #62620a;border-radius:1px"></div><div class="b" style="left:804.0px;top:421.6px;width:6.6px;height:7px;border:0.9px solid #62620a;border-radius:1px"></div><div class="b" style="left:838.5px;top:421.6px;width:6.6px;height:7px;border:0.9px solid #62620a;border-radius:1px"></div><div class="b" style="left:840.6px;top:423.9px;width:2.4px;height:2.4px;background:#1a1a1a;border-radius:0.5px"></div><div class="t" style="left:463.00px;top:432.16px;font-size:5.2px;color:#333;">e.</div><div class="t" style="left:663.50px;top:432.16px;font-size:5.2px;color:#333;">j.</div><div class="t" style="left:476.00px;top:432.13px;font-size:5.23px;color:#5a5a66;">Demonstrated excellent udder manipulation</div><div class="t" style="left:676.50px;top:432.13px;font-size:5.23px;color:#5a5a66;">Showed love and affection for all cows</div><div class="b" style="left:600.3px;top:430.5px;width:6.6px;height:7px;border:0.9px solid #62620a;border-radius:1px"></div><div class="b" style="left:602.4px;top:432.8px;width:2.4px;height:2.4px;background:#1a1a1a;border-radius:0.5px"></div><div class="b" style="left:635.1px;top:430.5px;width:6.6px;height:7px;border:0.9px solid #62620a;border-radius:1px"></div><div class="b" style="left:804.0px;top:430.5px;width:6.6px;height:7px;border:0.9px solid #62620a;border-radius:1px"></div><div class="b" style="left:838.5px;top:430.5px;width:6.6px;height:7px;border:0.9px solid #62620a;border-radius:1px"></div><div class="b" style="left:840.6px;top:432.8px;width:2.4px;height:2.4px;background:#1a1a1a;border-radius:0.5px"></div><div class="b" style="left:457.7px;top:370.5px;width:405.4px;height:69.5px;border:1px solid #2a2a2a;border-bottom-width:1.5px"></div><div class="b" style="left:588.2px;top:439.5px;width:72.6px;height:1.5px;background:#ffff40"></div><div class="b" style="left:793px;top:439.5px;width:70.4px;height:1.5px;background:#ffff40"></div>
<div class="co" style="left:161px;top:26px;width:101.3px;height:33.3px"></div>
<div class="t" style="left:189.00px;top:29.99px;font-size:11px;color:#fff;transform:scaleX(0.9467);transform-origin:0 0;font-weight:bold;z-index:23;">Go to the</div>
<div class="t" style="left:186.70px;top:43.09px;font-size:11px;color:#fff;transform:scaleX(0.9482);transform-origin:0 0;font-weight:bold;z-index:23;">Tester Tab</div>
<div class="circ" style="left:254px;top:33.3px;width:18.4px;height:18.4px"></div>
<div class="t" style="left:260.60px;top:37.43px;font-size:10.6px;color:#fff;transform:scaleX(0.8480);transform-origin:0 0;font-weight:bold;z-index:23;">1</div>
<svg style="left:268px;top:36px;z-index:21" width="54" height="14"><path d="M2 6.5 H41" stroke="#f7941d" stroke-width="2.2"/><path d="M38.5 1.2 L53.5 6.5 L38.5 11.8 Z" fill="#f7941d"/></svg>
<div class="co" style="left:262px;top:90.3px;width:101.7px;height:33.4px"></div>
<div class="t" style="left:291.30px;top:94.09px;font-size:11px;color:#fff;transform:scaleX(0.9532);transform-origin:0 0;font-weight:bold;z-index:23;">Click the</div>
<div class="t" style="left:285.40px;top:106.99px;font-size:11px;color:#fff;transform:scaleX(0.9532);transform-origin:0 0;font-weight:bold;z-index:23;">Test button</div>
<div class="circ" style="left:354.8px;top:97.8px;width:18.4px;height:18.4px"></div>
<div class="t" style="left:361.00px;top:102.23px;font-size:10.6px;color:#fff;transform:scaleX(0.9837);transform-origin:0 0;font-weight:bold;z-index:23;">2</div>
<svg style="left:360px;top:60px;z-index:21" width="52" height="46"><path d="M9 42 L37 16" stroke="#f7941d" stroke-width="2.3"/><path d="M45.4 6.3 L31.9 13.5 L39.2 19.4 Z" fill="#f7941d"/></svg>
<div class="co" style="left:746.6px;top:110.6px;width:136.6px;height:81.4px"></div>
<div class="t" style="left:756.90px;top:117.79px;font-size:11px;color:#fff;transform:scaleX(0.9705);transform-origin:0 0;font-weight:bold;z-index:23;">If a mark is detected in</div>
<div class="t" style="left:756.90px;top:131.21px;font-size:11px;color:#fff;transform:scaleX(0.9533);transform-origin:0 0;font-weight:bold;z-index:23;">the checkbox, the value</div>
<div class="t" style="left:756.90px;top:144.63px;font-size:11px;color:#fff;transform:scaleX(0.9373);transform-origin:0 0;font-weight:bold;z-index:23;">is assigned “True” and</div>
<div class="t" style="left:756.90px;top:158.05px;font-size:11px;color:#fff;transform:scaleX(0.9606);transform-origin:0 0;font-weight:bold;z-index:23;">“False” if a mark is not</div>
<div class="t" style="left:756.90px;top:171.47px;font-size:11px;color:#fff;transform:scaleX(0.9394);transform-origin:0 0;font-weight:bold;z-index:23;">present.</div>
<svg style="left:638px;top:180px;z-index:21" width="115" height="175"><path d="M12 8.9 H110.4" stroke="#f7941d" stroke-width="2.3"/><path d="M-0.1 8.9 L14.9 4.3 L14.9 13.5 Z" fill="#f7941d"/><path d="M110.4 8 V158" stroke="#f7941d" stroke-width="2.3"/><path d="M105.4 155.8 L115.4 155.8 L110.4 170.4 Z" fill="#f7941d"/></svg>
<div class="circ" style="left:738.3px;top:179.8px;width:18.4px;height:18.4px"></div>
<div class="t" style="left:744.60px;top:184.03px;font-size:10.6px;color:#fff;transform:scaleX(0.9837);transform-origin:0 0;font-weight:bold;z-index:23;">3</div>
<div class="yb" style="left:311px;top:32px;width:49.6px;height:21.5px"></div>
<div class="yb" style="left:400px;top:53px;width:18.9px;height:19.4px"></div>
<div class="yb" style="left:510.5px;top:105.4px;width:134.5px;height:189px"></div>
</body></html>
